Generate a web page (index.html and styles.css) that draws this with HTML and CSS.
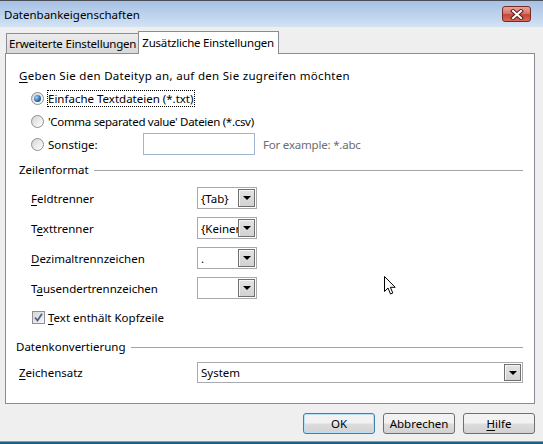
FILE: index.html
```html
<!DOCTYPE html>
<html lang="de">
<head>
    <meta charset="UTF-8">
    <title>Datenbankeigenschaften</title>
    <link rel="stylesheet" href="styles.css">
</head>
<body>
    <div class="window">
        <div class="titlebar">
            <span class="title">Datenbankeigenschaften</span>
            <div class="close-button">
                <svg width="14" height="11" viewBox="0 0 14 11">
                    <path d="M3 2 L11 9 M11 2 L3 9" stroke="#5a1f1a" stroke-width="4" stroke-linecap="square"/>
                    <path d="M3 2 L11 9 M11 2 L3 9" stroke="#ffffff" stroke-width="2" stroke-linecap="square"/>
                </svg>
            </div>
        </div>

        <div class="client">
            <div class="tabs">
                <div class="tab">Erweiterte Einstellungen</div>
                <div class="tab active">Zusätzliche Einstellungen</div>
            </div>

            <div class="panel">
                <div class="heading"><u>G</u>eben Sie den Dateityp an, auf den Sie zugreifen möchten</div>

                <div class="radio-list">
                    <div class="radio-row">
                        <span class="radio checked"></span>
                        <span class="focus-label">Einfache Textdateien (*.txt)</span>
                    </div>
                    <div class="radio-row">
                        <span class="radio"></span>
                        <span class="csv-label">'Comma separated value' Dateien (*.csv)</span>
                    </div>
                    <div class="radio-row">
                        <span class="radio"></span>
                        <span class="other-label">Sonstige:</span>
                        <span class="textbox"></span>
                        <span class="hint">For example: *.abc</span>
                    </div>
                </div>

                <div class="group-title row-format">Zeilenformat</div>

                <div class="field-list">
                    <div class="field">
                        <span class="field-label"><u>F</u>eldtrenner</span>
                        <div class="combo small">
                            <span class="combo-value">{Tab}</span>
                            <span class="combo-button"></span>
                        </div>
                    </div>
                    <div class="field">
                        <span class="field-label">T<u>e</u>xttrenner</span>
                        <div class="combo small">
                            <span class="combo-value">{Keiner}</span>
                            <span class="combo-button"></span>
                        </div>
                    </div>
                    <div class="field">
                        <span class="field-label"><u>D</u>ezimaltrennzeichen</span>
                        <div class="combo small">
                            <span class="combo-value">.</span>
                            <span class="combo-button"></span>
                        </div>
                    </div>
                    <div class="field">
                        <span class="field-label">T<u>a</u>usendertrennzeichen</span>
                        <div class="combo small">
                            <span class="combo-value"></span>
                            <span class="combo-button"></span>
                        </div>
                    </div>
                </div>

                <div class="check-row">
                    <span class="checkbox">
                        <svg width="9" height="9" viewBox="0 0 9 9">
                            <path d="M1 4.5 L3.5 7.5 L8 0.8" fill="none" stroke="#4c5f8e" stroke-width="1.8"/>
                        </svg>
                    </span>
                    <span><u>T</u>ext enthält Kopfzeile</span>
                </div>

                <div class="group-title conversion">Datenkonvertierung</div>

                <div class="field charset">
                    <span class="field-label"><u>Z</u>eichensatz</span>
                    <div class="combo wide">
                        <span class="combo-value">System</span>
                        <span class="combo-button"></span>
                    </div>
                </div>
            </div>

            <div class="buttons">
                <button class="dialog-button default">OK</button>
                <button class="dialog-button">Abbrechen</button>
                <button class="dialog-button"><u>H</u>ilfe</button>
            </div>
        </div>

        <div class="bottom-edge"></div>

        <svg class="pointer" width="13" height="20" viewBox="0 0 13 20">
            <path d="M0.5 0.5 L0.5 15.5 L4 12 L6.5 18 L8.8 17 L6.4 11.3 L11.2 11.3 Z" fill="#ffffff" stroke="#000000" stroke-width="1"/>
        </svg>
    </div>
</body>
</html>
```

FILE: styles.css
```css
body {
    margin: 0;
    font-family: "Noto Sans", "Open Sans", sans-serif;
    font-size: 11.5px;
    color: #000;
}

.window {
    position: relative;
    width: 543px;
    height: 444px;
    overflow: hidden;
    background-color: #efeff0;
    display: flex;
    flex-direction: column;
}

u {
    text-decoration: underline;
    text-underline-offset: 2px;
}

/* title bar */

.titlebar {
    height: 27px;
    box-sizing: border-box;
    border-top: 1px solid #4a4f57;
    background: linear-gradient(#a7c1e4, #c4d8f0 70%, #d4e3f4);
    display: flex;
    align-items: center;
    padding-left: 4px;
}

.title {
    font-size: 11.5px;
    color: #000;
}

.close-button {
    margin-left: auto;
    margin-right: 12px;
    width: 29px;
    height: 16px;
    box-sizing: border-box;
    border: 1px solid #7a2a22;
    border-radius: 3px;
    background: linear-gradient(#e5a59c, #d7776c 45%, #c5463a 55%, #d56a58);
    display: flex;
    align-items: center;
    justify-content: center;
}

/* tabs + panel */

.client {
    flex: 1;
    padding: 4px 8px 0 5px;
    display: flex;
    flex-direction: column;
}

.tabs {
    display: flex;
    height: 22px;
    padding-left: 1px;
    align-items: flex-end;
}

.tab {
    height: 20px;
    box-sizing: border-box;
    padding: 0 2px;
    line-height: 19px;
    letter-spacing: -0.2px;
    border: 1px solid #898c95;
    border-bottom: none;
    background: linear-gradient(#ececec, #d9d9d9);
}

.tab.active {
    height: 23px;
    margin-bottom: -1px;
    margin-left: -1px;
    padding: 0 4px 0 3px;
    line-height: 21px;
    background: #fff;
    position: relative;
    z-index: 1;
}

.panel {
    height: 351px;
    box-sizing: border-box;
    border: 1px solid #898c95;
    background: #fff;
    padding: 12px 11px 0 0;
}

.heading {
    height: 20px;
    line-height: 20px;
    padding-left: 13px;
    letter-spacing: 0.3px;
}

.radio-list {
    margin-top: 1px;
    padding-left: 25px;
    display: flex;
    flex-direction: column;
    gap: 1px;
}

.radio-row {
    height: 22px;
    display: flex;
    align-items: center;
}

.radio {
    width: 13px;
    height: 13px;
    box-sizing: border-box;
    border: 1px solid #8f9091;
    border-radius: 50%;
    background: linear-gradient(135deg, #d3d3d3, #f4f4f4 70%, #fff);
    margin-right: 4px;
    display: flex;
    align-items: center;
    justify-content: center;
}

.radio.checked::after {
    content: "";
    width: 7px;
    height: 7px;
    border-radius: 50%;
    background: radial-gradient(circle at 35% 35%, #a8d4f5, #2f6cb0 55%, #123a70);
}

.focus-label {
    border: 1px dotted #000;
    margin-left: -1px;
    padding-right: 1px;
    line-height: 15px;
}

.csv-label {
    letter-spacing: -0.3px;
}

.other-label {
    width: 95px;
}

.textbox {
    width: 112px;
    height: 22px;
    box-sizing: border-box;
    border: 1px solid #a3b5cf;
    background: #fff;
}

.hint {
    margin-left: 8px;
    color: #6d6d6d;
    letter-spacing: -0.2px;
}

.group-title {
    height: 20px;
    line-height: 20px;
    display: flex;
    align-items: center;
}

.group-title::after {
    content: "";
    flex: 1;
    border-top: 1px solid #a3a3a3;
    margin-left: 5px;
}

.row-format {
    margin-top: 5px;
    padding-left: 13px;
}

.conversion {
    margin-top: 9px;
    padding-left: 10px;
}

/* combo rows */

.field-list {
    margin-top: 7px;
    display: flex;
    flex-direction: column;
    gap: 8px;
}

.field {
    height: 22px;
    display: flex;
    align-items: center;
    padding-left: 25px;
}

.field-label {
    width: 166px;
}

.combo {
    height: 22px;
    box-sizing: border-box;
    border: 1px solid #a8aaad;
    background: #fff;
    display: flex;
    align-items: center;
    padding: 1px;
}

.combo.small {
    width: 60px;
}

.combo.wide {
    width: 326px;
    height: 21px;
}

.combo-value {
    flex: 1;
    overflow: hidden;
    white-space: nowrap;
    padding-left: 2px;
}

.combo-button {
    width: 17px;
    height: 100%;
    box-sizing: border-box;
    border: 1px solid #707070;
    background: linear-gradient(#e4e4e4, #d2d2d2);
    box-shadow: inset 1px 1px 0 #f6f6f6;
    display: flex;
    align-items: center;
    justify-content: center;
}

.combo-button::after {
    content: "";
    border-left: 4px solid transparent;
    border-right: 4px solid transparent;
    border-top: 4px solid #000;
}

.check-row {
    margin-top: 7px;
    height: 22px;
    display: flex;
    align-items: center;
    padding-left: 26px;
}

.checkbox {
    width: 13px;
    height: 13px;
    box-sizing: border-box;
    border: 1px solid #8f9091;
    background: linear-gradient(135deg, #d6d6d6, #f6f6f6);
    margin-right: 3px;
    display: flex;
    align-items: center;
    justify-content: center;
}

.charset {
    margin-top: 5px;
    height: 21px;
    padding-left: 13px;
}

.charset .field-label {
    width: 178px;
}

/* dialog buttons */

.buttons {
    margin-top: 9px;
    display: flex;
    justify-content: flex-end;
    gap: 8px;
}

.dialog-button {
    width: 72px;
    height: 21px;
    box-sizing: border-box;
    border: 1px solid #707070;
    border-radius: 3px;
    background: linear-gradient(#f2f2f2 45%, #dcdcdc 55%, #d2d2d2);
    font-family: inherit;
    font-size: 11.5px;
    color: #000;
    padding: 0;
}

.dialog-button.default {
    border-color: #3c7fb1;
    box-shadow: inset 0 0 0 1px #b8e0f6;
}

.bottom-edge {
    height: 3px;
    background: linear-gradient(#43b8e6 0 1px, #1d5f86 1px);
}

/* mouse pointer over the dialog */
.pointer {
    position: absolute;
    left: 384px;
    top: 276px;
}
```
